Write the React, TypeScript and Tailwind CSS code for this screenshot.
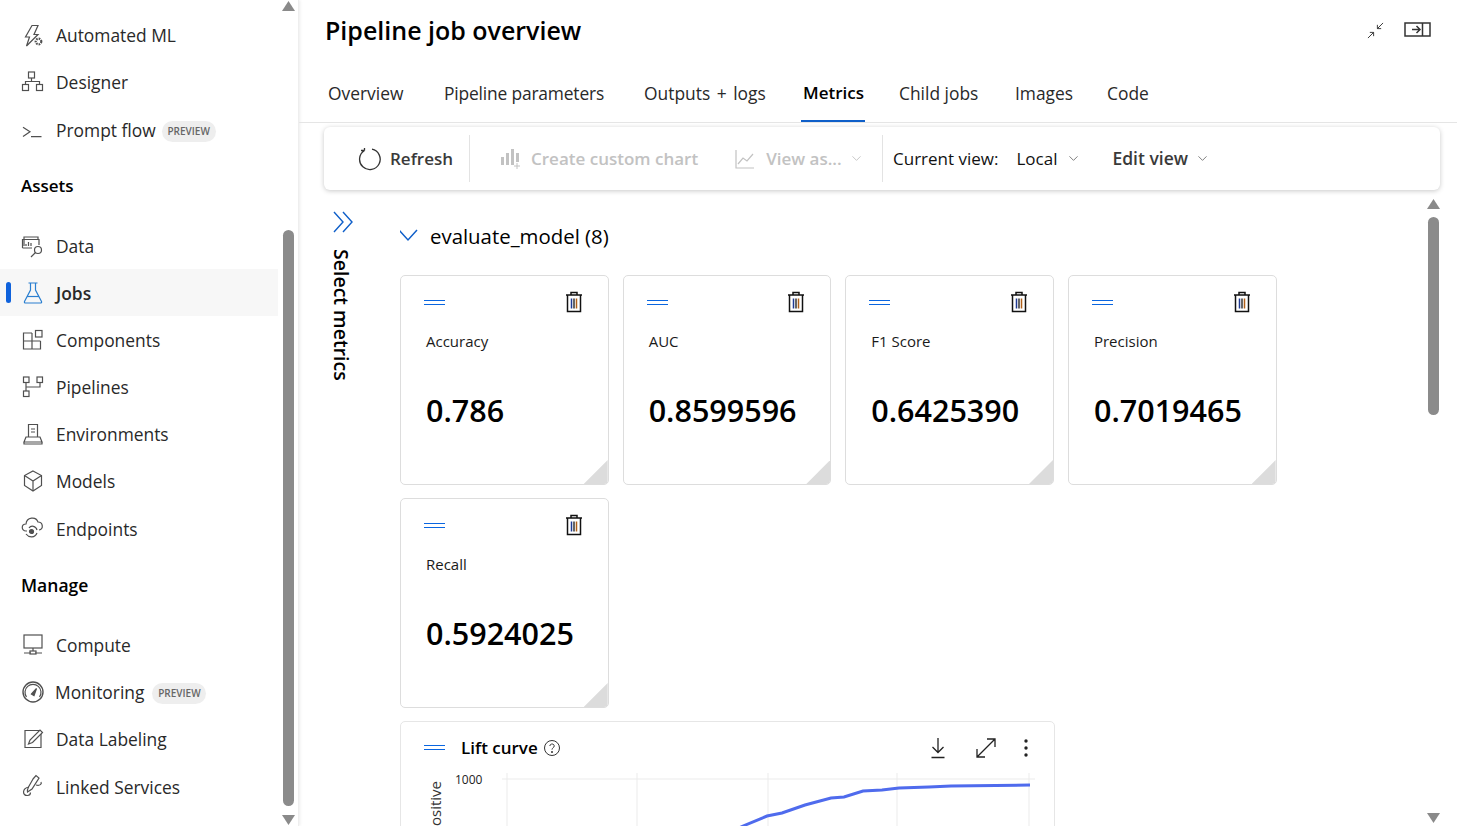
import type { ReactNode } from 'react';
import { ChevronDown } from 'lucide-react';

function Ico({ children, size = 24, className = 'text-[#505050]' }: { children: ReactNode; size?: number; className?: string }) {
  return (
    <svg width={size} height={size} viewBox="0 0 24 24" fill="none" stroke="currentColor" strokeWidth="1.2" className={`shrink-0 ${className}`}>
      {children}
    </svg>
  );
}

const navIcons: Record<string, ReactNode> = {
  automl: (
    <>
      <path d="M11 1.500h6l-4 9h4L5.500 22l3-9H4.500z" />
      <circle cx="17.500" cy="17.500" r="2.800" strokeWidth="2.200" strokeDasharray="1.600 1" fill="#fff" />
    </>
  ),
  designer: (
    <>
      <rect x="7.500" y="1" width="6" height="6" />
      <rect x="1.500" y="13.500" width="6" height="6" />
      <rect x="15.500" y="13.500" width="6" height="6" />
      <path d="M10.500 7v3.500M4.500 13.500v-3h14v3" />
    </>
  ),
  prompt: <path d="M2 9.200l7 4.600-7 4.600M10 18.600h10.500" />,
  data: (
    <>
      <path d="M3 12V3h14v2" />
      <path d="M1.500 14V5.500H18V11M1.500 14H11" />
      <path d="M5 12V10M7.500 12V8M10 12V9" />
      <circle cx="17" cy="16" r="3.500" />
      <path d="M14.500 18.500L10 23" />
    </>
  ),
  jobs: (
    <>
      <path d="M7.500 2h9M9.500 2v7L3.500 20.500c-.4 1 .2 1.500 1 1.500h15c.8 0 1.400-.5 1-1.500L14.500 9V2" />
      <path d="M6 15.500h12" />
    </>
  ),
  components: (
    <>
      <path d="M11 5H2.500v16h17v-8M2.500 13h17M11 5v16" />
      <rect x="14.500" y="2.500" width="6.500" height="6.500" />
    </>
  ),
  pipelines: (
    <>
      <rect x="2.500" y="2" width="5.500" height="5.500" />
      <rect x="16" y="2" width="5.500" height="5.500" />
      <rect x="2.500" y="16" width="5.500" height="5.500" />
      <path d="M5 7.500V16M5 12h14V7.500" />
    </>
  ),
  environments: (
    <>
      <path d="M7.500 15V2.500h9V15" />
      <path d="M10 7h4M10 10h4" />
      <path d="M5 15h14l2 5H3zM3 20v2h18v-2" />
    </>
  ),
  models: (
    <>
      <path d="M12 2l8.500 4.500v10L12 22l-8.500-5.500v-10z" />
      <path d="M3.500 6.500L12 12l8.500-5.500M12 12v10" />
    </>
  ),
  endpoints: (
    <>
      <path d="M6 15H5c-5 0-5-7 0-7 .5-7 10-8 12-2 5 0 6 7 1 8" />
      <path d="M5 18c3 4 9 4 11-1M8 12c2-3 7-2 8 2" />
      <circle cx="10.500" cy="15.500" r="2" fill="currentColor" />
    </>
  ),
  compute: (
    <>
      <rect x="3" y="2" width="18" height="13" />
      <path d="M12 15v3M3 20h7M14 20h7" />
      <rect x="9" y="18" width="6" height="3" />
    </>
  ),
  monitoring: (
    <>
      <circle cx="12" cy="12" r="10" strokeWidth="1.400" />
      <path d="M5.500 17A8 8 0 1 1 18.500 17" />
      <path d="M10.500 14L15.500 8.500l-2.500 7z" fill="currentColor" />
    </>
  ),
  labeling: (
    <>
      <path d="M18 3.500H4v17h16V7" />
      <path d="M7.500 17l1.500-4 10-10 2.500 2.500-10 10z" />
    </>
  ),
  linked: (
    <>
      <path d="M12 5l3-3.500 3 2.500-7 11-4.500 3c-.3-2 .5-4 1-5z" />
      <path d="M15 11c4 1 6-1 5-3M8 13c-7 1-7 9-1.500 8.500 2 0 3-1.500 3-3" />
    </>
  ),
};

function Preview({ tight }: { tight?: boolean }) {
  return (
    <span className={`${tight ? 'ml-[8px]' : 'ml-[6px]'} mt-[3px] flex h-[21px] w-[54px] items-center justify-center rounded-full bg-[#eeeeee] text-[10px] font-semibold text-[#666666]`}>
      PREVIEW
    </span>
  );
}

function NavRow({ icon, label, preview, active, tight, textPad = 'pt-[2px]' }: { icon: string; label: string; preview?: boolean; active?: boolean; tight?: boolean; textPad?: string }) {
  return (
    <div className={`relative flex h-[47px] items-center pl-[21px] ${active ? 'bg-[#f7f7f7]' : ''}`}>
      {active && <span className="absolute left-[6px] top-[13px] h-[21px] w-[5px] rounded-full bg-[#0f62dc]" />}
      <Ico className={active ? 'text-[#2a7fd0]' : 'text-[#505050]'}>{navIcons[icon]}</Ico>
      <span className={`${tight ? 'ml-[10px]' : 'ml-[11px]'} ${textPad} text-[17.4px] text-[#292929] ${active ? 'font-semibold' : ''}`}>{label}</span>
      {preview && <Preview tight={tight} />}
    </div>
  );
}

function Arrow({ down }: { down?: boolean }) {
  return (
    <svg width="13" height="10" viewBox="0 0 13 10" className="shrink-0 fill-[#8a8a8a]">
      <path d={down ? 'M0 0h13L6.500 10z' : 'M6.500 0L13 10H0z'} />
    </svg>
  );
}

function Sidebar() {
  return (
    <aside className="flex h-full w-[299px] shrink-0 border-r border-[#eeeeee] shadow-[1px_0_3px_rgba(0,0,0,0.08)]">
      <nav className="w-[278px] shrink-0 pt-[12px]">
        <NavRow icon="automl" label="Automated ML" textPad="pt-0" />
        <NavRow icon="designer" label="Designer" textPad="pt-0" />
        <NavRow icon="prompt" label="Prompt flow" preview />
        <h3 className="flex h-[69px] items-start pl-[21px] pt-[20px] text-[17px] font-semibold text-black">Assets</h3>
        <NavRow icon="data" label="Data" />
        <NavRow icon="jobs" label="Jobs" active />
        <NavRow icon="components" label="Components" />
        <NavRow icon="pipelines" label="Pipelines" />
        <NavRow icon="environments" label="Environments" />
        <NavRow icon="models" label="Models" />
        <NavRow icon="endpoints" label="Endpoints" textPad="pt-[4px]" />
        <h3 className="flex h-[70px] items-start pl-[21px] pt-[21px] text-[17.500px] font-semibold text-black">Manage</h3>
        <NavRow icon="compute" label="Compute" />
        <NavRow icon="monitoring" label="Monitoring" preview tight />
        <NavRow icon="labeling" label="Data Labeling" />
        <NavRow icon="linked" label="Linked Services" textPad="pt-[4px]" />
      </nav>
      <div className="ml-[5px] flex w-[11px] flex-col items-center pt-[1px]">
        <Arrow />
        <div className="mt-[219px] h-[576px] w-[11px] rounded-full bg-[#8b8b8b]" />
        <div className="mt-[9px]">
          <Arrow down />
        </div>
      </div>
    </aside>
  );
}

function Handle() {
  return (
    <span className="flex w-[21px] flex-col gap-[3px]">
      <span className="h-[1px] bg-[#0a66e0]" />
      <span className="h-[1px] bg-[#0a66e0]" />
    </span>
  );
}

function Trash() {
  return (
    <svg width="18" height="22" viewBox="0 0 18 22" fill="none" stroke="#111111" strokeWidth="1.500">
      <path d="M1 4h16M2.500 4v16.500h13V4M6 4V1.500h6V4" />
      <path d="M6.500 7.500v10" stroke="#1f3a93" />
      <path d="M9 7.500v10" stroke="#333333" />
      <path d="M11.500 7.500v10" stroke="#b0601a" />
    </svg>
  );
}

function MetricCard({ label, value }: { label: string; value: string }) {
  return (
    <div className="relative h-[210px] overflow-hidden rounded-[5px] border border-[#dddddd] bg-white pl-[25px] pr-[25px] pt-[15px]">
      <div className="-ml-[2px] flex h-[22px] items-center justify-between">
        <Handle />
        <Trash />
      </div>
      <p className="mt-[17px] text-[15px] text-[#1a1a1a]">{label}</p>
      <p className="mt-[37px] text-[30.500px] font-semibold leading-[40px] text-black">{value}</p>
      <span className="absolute bottom-0 right-0 h-[24px] w-[24px] bg-[#dcdcdc] [clip-path:polygon(100%_0,100%_100%,0_100%)]" />
    </div>
  );
}

function LiftCurve() {
  return (
    <div className="col-span-3 col-start-1 h-[400px] w-[655px] rounded-[5px] border border-[#e6e6e6] bg-white">
      <div className="flex h-[51px] items-center pl-[23px] pr-[26px]">
        <Handle />
        <span className="ml-[16px] text-[17px] font-semibold text-black">Lift curve</span>
        <svg width="18" height="18" viewBox="0 0 18 18" fill="none" stroke="#333333" className="ml-[5px]">
          <circle cx="9" cy="9" r="7.500" />
          <path d="M6.800 7c.3-2.800 4.600-2.500 4.400 0 0 1.800-2.200 1.800-2.200 3.600" />
          <circle cx="9" cy="13" r=".6" fill="#333333" />
        </svg>
        <div className="ml-auto flex items-center">
          <svg width="16" height="22" viewBox="0 0 16 22" fill="none" stroke="#222222" strokeWidth="1.300">
            <path d="M8 1v14M2.500 10L8 15.500 13.500 10M1.500 20.500h13" />
          </svg>
          <svg width="22" height="22" viewBox="0 0 22 22" fill="none" stroke="#222222" strokeWidth="1.300" className="ml-[29px]">
            <path d="M2 20L20 2M12 2h8v8M2 12v8h8" />
          </svg>
          <svg width="4" height="18" viewBox="0 0 4 18" fill="#222222" className="ml-[27px]">
            <circle cx="2" cy="2" r="1.700" />
            <circle cx="2" cy="9" r="1.700" />
            <circle cx="2" cy="16" r="1.700" />
          </svg>
        </div>
      </div>
      <svg width="653" height="120" viewBox="0 0 653 120" fill="none" className="-mt-[3px]">
        <path d="M101 9H634M106 3V120M236 3V120M367 3V120M496 3V120M628 3V120" stroke="#ebebeb" />
        <path
          d="M330 62L342 56 366 46 381 43 404 35 430 28 443 27 462 21 481 20 498 18 528 17 550 16 629 15"
          stroke="#4f6bed"
          strokeWidth="3"
        />
        <text x="54" y="13.500" fontSize="12" fill="#222222">1000</text>
        <text transform="translate(40 11) rotate(-90)" textAnchor="end" fontSize="15" fill="#333333">True Positive</text>
      </svg>
    </div>
  );
}

const tabs = [
  { label: 'Overview', w: 'w-[116px]', cls: '' },
  { label: 'Pipeline parameters', w: 'w-[200px]', cls: 'tracking-[-0.17px]' },
  { label: 'Outputs + logs', w: 'w-[159px]', cls: '[word-spacing:2px]' },
  { label: 'Metrics', w: 'w-[96px]', cls: 'text-[17px]', active: true },
  { label: 'Child jobs', w: 'w-[116px]', cls: '' },
  { label: 'Images', w: 'w-[92px]', cls: '' },
  { label: 'Code', w: 'w-[60px]', cls: '' },
];

const metrics = [
  { label: 'Accuracy', value: '0.786' },
  { label: 'AUC', value: '0.8599596' },
  { label: 'F1 Score', value: '0.6425390' },
  { label: 'Precision', value: '0.7019465' },
  { label: 'Recall', value: '0.5924025' },
];

function Toolbar() {
  return (
    <div className="ml-[25px] mt-[4px] flex h-[63px] w-[1116px] shrink-0 items-center rounded-[6px] bg-white text-[17px] shadow-[0_1px_5px_rgba(0,0,0,0.22)]">
      <div className="flex h-[47px] w-[146px] items-center border-r border-[#e3e3e3] pl-[33px]">
        <svg width="24" height="24" viewBox="0 0 24 24" fill="none" stroke="#333333" strokeWidth="1.300">
          <path d="M7.500 3.500A10.300 10.300 0 1 0 15 2.200M7.500 3.500V1M7.500 3.500H4" />
        </svg>
        <span className="ml-[9px] font-semibold text-[#3a3a3a]">Refresh</span>
      </div>
      <div className="flex h-[47px] w-[413px] items-center border-r border-[#e3e3e3] pl-[30px] font-semibold text-[#c2c2c2]">
        <svg width="22" height="22" viewBox="0 0 22 22" fill="#c2c2c2">
          <path d="M1 9h3v8H1zM6 5h3v12H6zM11 1h3v16h-3zM16 5h3v9h-3z" />
          <path d="M17 15v6M14 18h6" stroke="#c2c2c2" fill="none" />
        </svg>
        <span className="ml-[9px]">Create custom chart</span>
        <svg width="20" height="20" viewBox="0 0 20 20" fill="none" stroke="#c2c2c2" strokeWidth="1.200" className="ml-[37px]">
          <path d="M1 1v18h18M3 15l5-6 4 3 6-7" />
        </svg>
        <span className="ml-[11px]">View as...</span>
        <ChevronDown size={15} strokeWidth={1.200} className="ml-[7px] text-[#b5b5b5]" />
      </div>
      <span className="ml-[10px] text-[#111111]">Current view:</span>
      <span className="ml-[18px] pt-[1px] text-[#111111]">Local</span>
      <ChevronDown size={15} strokeWidth={1.200} className="ml-[9px] text-[#555555]" />
      <span className="ml-[31px] text-[17.500px] font-semibold text-[#3a3a3a]">Edit view</span>
      <ChevronDown size={15} strokeWidth={1.200} className="ml-[7px] text-[#555555]" />
    </div>
  );
}

export default function App() {
  return (
    <div className="flex h-[826px] w-[1457px] overflow-hidden bg-white font-['Open_Sans',sans-serif] text-[#292929]">
      <Sidebar />
      <main className="flex min-w-0 flex-1 flex-col">
        <header className="flex h-[62px] shrink-0 items-center justify-between pl-[26px] pr-[26px]">
          <h1 className="text-[25px] font-semibold text-black">Pipeline job overview</h1>
          <div className="flex items-center gap-[20px]">
            <svg width="17" height="17" viewBox="0 0 18 18" fill="none" stroke="#333333" className="mb-[2px]">
              <path d="M1 17l6-6M3 11h4v4M17 1l-6 6M11 3v4h4" />
            </svg>
            <svg width="27" height="15" viewBox="0 0 27 15" fill="none" stroke="#333333" strokeWidth="1.500" className="mb-[4px]">
              <rect x="1" y="1" width="25" height="13" />
              <path d="M18.500 1v13M8 7.500h8M12.500 4l3.500 3.500-3.500 3.500" />
            </svg>
          </div>
        </header>
        <div className="flex h-[61px] shrink-0 items-stretch border-b border-[#e5e5e5] pl-[29px] text-[17.4px]">
          {tabs.map((t) => (
            <div key={t.label} className={`relative flex items-center pt-[2px] ${t.w} ${t.cls} ${t.active ? 'font-semibold text-black' : 'text-[#292929]'}`}>
              {t.label}
              {t.active && <span className="absolute bottom-0 left-[-2px] h-[2px] w-[64px] bg-[#0f5fc9]" />}
            </div>
          ))}
        </div>
        <Toolbar />
        <div className="flex min-h-0 flex-1">
          <div className="ml-[25px] w-[76px] shrink-0 pt-[21px]">
            <svg width="24" height="22" viewBox="0 0 24 22" fill="none" stroke="#0f5fc9" strokeWidth="1.400" className="ml-[8px]">
              <path d="M2 1l9 10-9 10M11 1l9 10-9 10" />
            </svg>
            <div className="ml-[4px] mt-[16px] text-[19.500px] font-semibold leading-[27px] text-black [writing-mode:vertical-rl]">Select metrics</div>
          </div>
          <div className="min-w-0 flex-1 overflow-hidden">
            <div className="flex h-[85px] items-start pt-[31px]">
              <svg width="20" height="14" viewBox="0 0 20 14" fill="none" stroke="#0f5fc9" strokeWidth="1.500" className="-ml-[2px] mt-[7px]">
                <path d="M1 2l9 10 9-10" />
              </svg>
              <span className="ml-[12px] text-[20.400px] font-medium leading-[30px] text-black">evaluate_model (8)</span>
            </div>
            <div className="grid w-[877px] grid-cols-[repeat(4,208.67px)] gap-x-[14px] gap-y-[13px]">
              {metrics.map((m) => (
                <MetricCard key={m.label} label={m.label} value={m.value} />
              ))}
              <LiftCurve />
            </div>
          </div>
          <div className="mr-[17px] flex w-[13px] shrink-0 flex-col items-center pt-[9px]">
            <Arrow />
            <div className="mt-[8px] h-[198px] w-[11px] rounded-full bg-[#8b8b8b]" />
            <div className="mb-[3px] mt-auto">
              <Arrow down />
            </div>
          </div>
        </div>
      </main>
    </div>
  );
}
